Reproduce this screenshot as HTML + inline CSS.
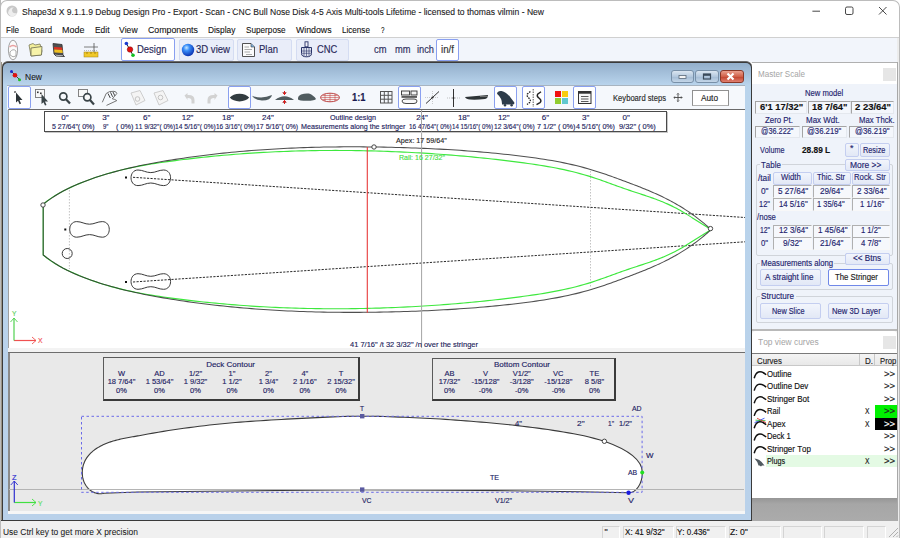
<!DOCTYPE html>
<html><head><meta charset="utf-8"><style>
html,body{margin:0;padding:0;}
body{width:900px;height:538px;position:relative;overflow:hidden;background:#f0f0f0;font-family:"Liberation Sans",sans-serif;}
div,span,svg{position:absolute;box-sizing:border-box;}
.t{white-space:pre;font-kerning:none;-webkit-text-stroke:0.15px currentColor;}
</style></head><body>
<div style="left:0px;top:0px;width:900px;height:38px;background:#ffffff;"></div>
<div style="left:0px;top:37px;width:900px;height:1px;background:#d0d0d0;"></div>
<div style="left:0px;top:38px;width:900px;height:24px;background:#f2f5fb;"></div>
<div style="left:897px;top:62px;width:3px;height:476px;background:#e9ecf1;"></div>
<div style="left:897px;top:38px;width:3px;height:500px;background:#ececec;"></div>
<div style="left:897px;top:62px;width:1px;height:459px;background:#a8a8a8;"></div>
<div style="left:0px;top:0px;width:1px;height:538px;background:#b8b8b8;"></div>
<div style="left:0px;top:62px;width:2px;height:459px;background:#9a9486;"></div>
<div style="left:2px;top:61px;width:750px;height:460px;background:#3a3a3a;border-radius:6px 6px 0 0;border-top:1px solid #6a6a6a;"></div>
<div style="left:3px;top:63px;width:748px;height:457px;background:linear-gradient(#93afcb,#b9d4ec 22px,#b9d1ea);border-radius:5px 5px 0 0;"></div>
<div style="left:7px;top:85px;width:738px;height:25px;background:#f5f8fc;border-top:1px solid #a8b4c0;"></div>
<div style="left:8px;top:109px;width:737px;height:240px;background:#ffffff;border-left:1px solid #a0a0a0;border-top:1px solid #6a6a6a;"></div>
<div style="left:8px;top:348px;width:737px;height:5px;background:#f3f3f3;border-bottom:1px solid #6e6e6e;"></div>
<div style="left:8px;top:353px;width:737px;height:159px;background:#e9e9e9;border-left:2px solid #8a8a8a;"></div>
<div style="left:8px;top:511px;width:737px;height:3px;background:#f6f6f6;"></div>
<div style="left:752px;top:62px;width:145px;height:267px;background:#eff3fa;"></div>
<div style="left:752px;top:62px;width:145px;height:22px;background:#ffffff;"></div>
<div style="left:752px;top:329px;width:145px;height:2px;background:#b9b9b9;"></div>
<div style="left:752px;top:331px;width:145px;height:167px;background:#ffffff;border-radius:4px 4px 0 0;"></div>
<div style="left:752px;top:498px;width:145px;height:23px;background:linear-gradient(#969696,#a6a6a6 6px,#ababab);"></div>
<div style="left:0px;top:520px;width:752px;height:1px;background:#3a3a3a;"></div>
<div style="left:0px;top:521px;width:900px;height:17px;background:#f0f0f0;"></div>
<span class="t" style="left:22.00px;top:5px;font-size:9.4px;line-height:13px;color:#1a1a1a;font-weight:normal;transform:scaleX(0.9133);transform-origin:0 0;-webkit-text-stroke:0.1px #1a1a1a;">Shape3d X 9.1.1.9 Debug Design Pro - Export - Scan - CNC Bull Nose Disk 4-5 Axis Multi-tools Lifetime - licensed to thomas vilmin - New</span>
<span class="t" style="left:5.80px;top:23px;font-size:9.4px;line-height:13px;color:#111;font-weight:normal;transform:scaleX(0.8709);transform-origin:0 0;-webkit-text-stroke:0.1px #111;">File</span>
<span class="t" style="left:29.50px;top:23px;font-size:9.4px;line-height:13px;color:#111;font-weight:normal;transform:scaleX(0.8774);transform-origin:0 0;-webkit-text-stroke:0.1px #111;">Board</span>
<span class="t" style="left:62.00px;top:23px;font-size:9.4px;line-height:13px;color:#111;font-weight:normal;transform:scaleX(0.9565);transform-origin:0 0;-webkit-text-stroke:0.1px #111;">Mode</span>
<span class="t" style="left:94.50px;top:23px;font-size:9.4px;line-height:13px;color:#111;font-weight:normal;transform:scaleX(0.8955);transform-origin:0 0;-webkit-text-stroke:0.1px #111;">Edit</span>
<span class="t" style="left:119.00px;top:23px;font-size:9.4px;line-height:13px;color:#111;font-weight:normal;transform:scaleX(0.9143);transform-origin:0 0;-webkit-text-stroke:0.1px #111;">View</span>
<span class="t" style="left:148.00px;top:23px;font-size:9.4px;line-height:13px;color:#111;font-weight:normal;transform:scaleX(0.9381);transform-origin:0 0;-webkit-text-stroke:0.1px #111;">Components</span>
<span class="t" style="left:208.30px;top:23px;font-size:9.4px;line-height:13px;color:#111;font-weight:normal;transform:scaleX(0.8887);transform-origin:0 0;-webkit-text-stroke:0.1px #111;">Display</span>
<span class="t" style="left:246.00px;top:23px;font-size:9.4px;line-height:13px;color:#111;font-weight:normal;transform:scaleX(0.8731);transform-origin:0 0;-webkit-text-stroke:0.1px #111;">Superpose</span>
<span class="t" style="left:296.00px;top:23px;font-size:9.4px;line-height:13px;color:#111;font-weight:normal;transform:scaleX(0.9360);transform-origin:0 0;-webkit-text-stroke:0.1px #111;">Windows</span>
<span class="t" style="left:342.00px;top:23px;font-size:9.4px;line-height:13px;color:#111;font-weight:normal;transform:scaleX(0.8640);transform-origin:0 0;-webkit-text-stroke:0.1px #111;">License</span>
<span class="t" style="left:380.50px;top:23px;font-size:9.4px;line-height:13px;color:#111;font-weight:normal;transform:scaleX(0.6709);transform-origin:0 0;-webkit-text-stroke:0.1px #111;">?</span>
<svg style="left:5px;top:39px" width="16" height="22" viewBox="0 0 16 22"><ellipse cx="8" cy="11" rx="4.6" ry="9.8" fill="#fafafa" stroke="#9a9a9a" stroke-width="0.9"/><path d="M4.5 8 Q8 5 11.5 8" fill="none" stroke="#e8a0a0" stroke-width="1.6"/><path d="M5 13 Q8 9 11 12 L11 17 Q8 19 5 16 Z" fill="#ffffff" stroke="#8a8a8a" stroke-width="0.7"/></svg>
<svg style="left:27px;top:42px" width="17" height="15" viewBox="0 0 17 15"><path d="M2 3 L6 1.5 L8 3 L13 2 L15 9 L14 13 L4 14 Z" fill="#f2ee9a" stroke="#7a7a5a" stroke-width="0.8"/><path d="M4 6 L15 4.5 L14.5 13 L4 14 Z" fill="#f6f2a8" stroke="#6a6a50" stroke-width="0.8"/></svg>
<svg style="left:51px;top:42px" width="15" height="16" viewBox="0 0 15 16"><path d="M2 1.5 L11 2.5 L12 13 L3 12 Z" fill="#505050" stroke="#303030" stroke-width="0.8"/><path d="M3 5 L11 5.6 L11.4 8 L3.2 7.5 Z" fill="#e03020"/><path d="M3.2 7.5 L11.4 8 L11.7 11 L3.4 10.5 Z" fill="#f0c020"/><path d="M12 13 L13.5 14.5 L5 14 L3 12" fill="none" stroke="#404040" stroke-width="1"/></svg>
<svg style="left:83px;top:43px" width="16" height="15" viewBox="0 0 16 15"><line x1="1" y1="4" x2="15" y2="4" stroke="#606060" stroke-width="0.8"/><line x1="1" y1="7.5" x2="15" y2="7.5" stroke="#909090" stroke-width="0.6" stroke-dasharray="1,1"/><line x1="11" y1="0" x2="11" y2="9" stroke="#505050" stroke-width="0.8"/><rect x="1" y="9" width="14" height="5" fill="#f0c828" stroke="#a08010" stroke-width="0.5"/><line x1="4" y1="9" x2="4" y2="11" stroke="#806000" stroke-width="0.6"/><line x1="8" y1="9" x2="8" y2="11" stroke="#806000" stroke-width="0.6"/><line x1="12" y1="9" x2="12" y2="11" stroke="#806000" stroke-width="0.6"/></svg>
<div style="left:121px;top:38px;width:54px;height:23px;background:#ffffff;border:1px solid #8aa0f0;border-radius:2px;"></div>
<div style="left:179px;top:39px;width:55px;height:22px;background:#e9edf9;border:1px solid #d4dcf2;border-radius:2px;"></div>
<div style="left:237px;top:39px;width:55px;height:22px;background:#e9edf9;border:1px solid #d4dcf2;border-radius:2px;"></div>
<div style="left:296px;top:39px;width:53px;height:22px;background:#e9edf9;border:1px solid #d4dcf2;border-radius:2px;"></div>
<div style="left:436px;top:39px;width:23px;height:22px;background:#ffffff;border:1px solid #8aa0f0;border-radius:2px;"></div>
<svg style="left:124px;top:41px" width="14" height="18" viewBox="0 0 14 18"><line x1="2.4" y1="2.5" x2="9" y2="14.3" stroke="#333" stroke-width="1"/><circle cx="2.4" cy="2.5" r="1.8" fill="#1a3ad0"/><circle cx="6" cy="8.5" r="2.8" fill="#e01010" stroke="#600" stroke-width="0.4"/><circle cx="9" cy="14.3" r="1.8" fill="#10c020"/></svg>
<svg style="left:181px;top:43px" width="14" height="14" viewBox="0 0 14 14"><defs><radialGradient id="sph" cx="0.38" cy="0.32" r="0.7"><stop offset="0" stop-color="#c8e8ff"/><stop offset="0.35" stop-color="#3a8ef8"/><stop offset="1" stop-color="#0a30b0"/></radialGradient></defs><circle cx="7" cy="7" r="6.2" fill="url(#sph)"/></svg>
<svg style="left:241px;top:42px" width="15" height="16" viewBox="0 0 15 16"><path d="M1.5 1.5 L10 1.5 L13.5 5 L13.5 14.5 L1.5 14.5 Z" fill="#fbfbfb" stroke="#404040" stroke-width="0.9"/><path d="M10 1.5 L10 5 L13.5 5" fill="#7ab0e0" stroke="#404040" stroke-width="0.6"/><path d="M3.5 5 L8 5 M3.5 7.5 L11 7.5 M3.5 10 L9 10 M5 12.5 L11 12.5" stroke="#888" stroke-width="0.7"/></svg>
<svg style="left:299px;top:41px" width="15" height="17" viewBox="0 0 15 17"><rect x="6" y="0.8" width="3" height="5" fill="#f0f0f8" stroke="#2a3468" stroke-width="0.9"/><path d="M2.5 6.5 L12.5 6.5 L12.5 12.5 Q12.5 15.8 7.5 15.8 Q2.5 15.8 2.5 12.5 Z" fill="#dfe3f0" stroke="#2a3468" stroke-width="1"/><path d="M2.5 10 L12.5 10 M3 12.3 L12 12.3 M5 6.5 L5 15 M7.5 6.5 L7.5 15.5 M10 6.5 L10 15" stroke="#2a3468" stroke-width="0.6"/></svg>
<span class="t" style="left:137.00px;top:42px;font-size:10.5px;line-height:14px;color:#2a2a5a;font-weight:normal;transform:scaleX(0.9027);transform-origin:0 0;">Design</span>
<span class="t" style="left:196.00px;top:42px;font-size:10.5px;line-height:14px;color:#2a2a5a;font-weight:normal;transform:scaleX(0.9096);transform-origin:0 0;">3D view</span>
<span class="t" style="left:259.00px;top:42px;font-size:10.5px;line-height:14px;color:#2a2a5a;font-weight:normal;transform:scaleX(0.9036);transform-origin:0 0;">Plan</span>
<span class="t" style="left:316.70px;top:42px;font-size:10.5px;line-height:14px;color:#2a2a5a;font-weight:normal;transform:scaleX(0.8920);transform-origin:0 0;">CNC</span>
<span class="t" style="left:373.50px;top:43px;font-size:10px;line-height:13px;color:#2e2e60;font-weight:normal;transform:scaleX(0.9381);transform-origin:0 0;">cm</span>
<span class="t" style="left:394.50px;top:43px;font-size:10px;line-height:13px;color:#2e2e60;font-weight:normal;transform:scaleX(0.9309);transform-origin:0 0;">mm</span>
<span class="t" style="left:416.50px;top:43px;font-size:10px;line-height:13px;color:#2e2e60;font-weight:normal;transform:scaleX(0.9264);transform-origin:0 0;">inch</span>
<span class="t" style="left:441.00px;top:43px;font-size:10px;line-height:13px;color:#333;font-weight:normal;transform:scaleX(0.9738);transform-origin:0 0;">in/f</span>
<svg style="left:720px;top:0px" width="178" height="22" viewBox="0 0 178 22"><line x1="92.4" y1="11.2" x2="100" y2="11.2" stroke="#333" stroke-width="0.9"/><rect x="125.5" y="7" width="7.5" height="7.5" rx="1.5" fill="none" stroke="#333" stroke-width="0.9"/><path d="M159 7 L166.5 14.5 M166.5 7 L159 14.5" stroke="#333" stroke-width="0.9"/></svg>
<svg style="left:5px;top:4px" width="14" height="14" viewBox="0 0 14 14"><circle cx="7" cy="7" r="5.5" fill="#c8c8c8"/><path d="M3 9 Q4 3 9 3.5 Q6 5 7.5 8 Q9 10 12 9 Q10 12.5 6.5 12.5 Q4 12 3 9Z" fill="#eeeeee"/></svg>
<svg style="left:9px;top:69.2px" width="14" height="14" viewBox="0 0 14 14"><line x1="2.5" y1="2.5" x2="11" y2="11" stroke="#333" stroke-width="0.9"/><circle cx="2.5" cy="2.5" r="1.5" fill="#1a2ad0"/><circle cx="6" cy="6.2" r="2.3" fill="#e01010"/><circle cx="10.5" cy="10.8" r="1.5" fill="#20c020"/></svg>
<span class="t" style="left:24.50px;top:70px;font-size:9.6px;line-height:13px;color:#1a1a1a;font-weight:normal;transform:scaleX(0.8843);transform-origin:0 0;-webkit-text-stroke:0.1px #1a1a1a;">New</span>
<div style="left:671px;top:70px;width:23px;height:13px;background:linear-gradient(#dbe6f1,#b4c9de 50%,#a2bbd4 51%,#c4d6e8);border:1px solid #7890a8;border-radius:3px;"></div>
<div style="left:695px;top:70px;width:24px;height:13px;background:linear-gradient(#dbe6f1,#b4c9de 50%,#a2bbd4 51%,#c4d6e8);border:1px solid #7890a8;border-radius:3px;"></div>
<div style="left:720px;top:70px;width:24px;height:13px;background:linear-gradient(#eaa08e,#d0604a 50%,#c0402a 51%,#e08070);border:1px solid #8a3828;border-radius:3px;"></div>
<svg style="left:671px;top:70px" width="73" height="13" viewBox="0 0 73 13"><rect x="8" y="5.5" width="7" height="3" fill="#f4f4f4" stroke="#5a6a7a" stroke-width="0.8"/><rect x="32.5" y="4" width="7" height="5" fill="none" stroke="#3a4a5a" stroke-width="1.2"/><rect x="33" y="4" width="6" height="1.8" fill="#3a4a5a"/><path d="M56.5 3.5 L62.5 9.5 M62.5 3.5 L56.5 9.5" stroke="#ffffff" stroke-width="2.2"/></svg>
<div style="left:8px;top:86px;width:23px;height:23px;background:#ffffff;border:1px solid #8aa0f0;border-radius:2px;"></div>
<div style="left:228px;top:86px;width:23px;height:23px;background:#ffffff;border:1px solid #8aa0f0;border-radius:2px;"></div>
<div style="left:398px;top:86px;width:23px;height:23px;background:#ffffff;border:1px solid #8aa0f0;border-radius:2px;"></div>
<div style="left:494px;top:86px;width:23px;height:23px;background:#ffffff;border:1px solid #8aa0f0;border-radius:2px;"></div>
<div style="left:522px;top:86px;width:23px;height:23px;background:#ffffff;border:1px solid #8aa0f0;border-radius:2px;"></div>
<div style="left:573px;top:86px;width:23px;height:23px;background:#ffffff;border:1px solid #8aa0f0;border-radius:2px;"></div>
<svg style="left:0;top:0" width="900" height="538" viewBox="0 0 900 538"><path d="M14.5 91.5 L15.5 92.5" stroke="#222" stroke-width="1.6"/><path d="M16 92.5 L22.5 100 L19.5 100 L21 103.5 L19.6 104.2 L18 100.8 L16 102.6 Z" fill="#2d3437"/><rect x="35.5" y="89.5" width="9" height="8" fill="#f8f8f8" stroke="#777" stroke-width="0.9"/><rect x="37" y="91.5" width="1.6" height="1.6" fill="#333"/><rect x="40" y="92.5" width="1.6" height="1.6" fill="#333"/><path d="M41.5 94 L48 101.5 L45 101.5 L46.5 105 L45 105.6 L43.5 102.3 L41.5 104 Z" fill="#3a4448"/><circle cx="63.3" cy="96.5" r="3.6" fill="none" stroke="#3a4448" stroke-width="1.7"/><path d="M66 99.2 L70 103.5" stroke="#3a4448" stroke-width="2.2"/><rect x="78.5" y="89.5" width="9" height="7" fill="#f8f8f8" stroke="#777" stroke-width="0.9"/><circle cx="87.3" cy="97.3" r="3.6" fill="#f8f8f8" stroke="#3a4448" stroke-width="1.7"/><path d="M90 100 L94 104.5" stroke="#3a4448" stroke-width="2.2"/><path d="M102.3 102.3 L106.2 93.5 Q109 90.8 114 91.3 Q116.8 91.8 116.8 93.6 L112.3 98.8 Q115 99.2 116.8 100.6 L106.5 105.4" fill="none" stroke="#666" stroke-width="0.9"/><path d="M108 93.5 L110.3 98 M110.5 92.3 L112.6 96.8 M113 92 L114.8 95.8" stroke="#333" stroke-width="0.9"/><path d="M131 93 L140 90.5 L145 100.5 L136 105 Z" fill="#f4f4f4" stroke="#c8c8c8" stroke-width="0.9"/><circle cx="137.5" cy="99" r="2.3" fill="none" stroke="#c4c4c4" stroke-width="1"/><path d="M154 93 L163 90.5 L168 100.5 L159 105 Z" fill="#f4f4f4" stroke="#c8c8c8" stroke-width="0.9"/><circle cx="160.5" cy="97.5" r="2.3" fill="none" stroke="#c4c4c4" stroke-width="1"/><path d="M184.5 95.5 L187.5 93 L187.5 95 Q194.5 94.5 194.5 100 L194.5 103.5 L191.5 103.5 L191.5 100.5 Q191.5 97.8 187.5 98 L187.5 100 Z" fill="#d2d2d2"/><path d="M217.5 95.5 L214.5 93 L214.5 95 Q207.5 94.5 207.5 100 L207.5 103.5 L210.5 103.5 L210.5 100.5 Q210.5 97.8 214.5 98 L214.5 100 Z" fill="#d2d2d2"/><path d="M229.8 97.6 Q233 93.8 239.5 93.8 Q246 93.8 249.2 97.6 Q246 101.4 239.5 101.4 Q233 101.4 229.8 97.6 Z" fill="#333c40"/><path d="M252 95.8 Q262 99.5 272 95 Q271 100.5 262 100.5 Q255 100.3 252 95.8 Z" fill="#505c60"/><path d="M275 100 Q284.5 92.5 294 100 Z" fill="#505c60"/><path d="M284.5 91 L284.5 94.5 M282.8 92.5 L284.5 94.5 L286.2 92.5 M284.5 104 L284.5 100.5 M282.8 102.5 L284.5 100.5 L286.2 102.5" stroke="#e01818" stroke-width="1"/><path d="M298 99.5 Q297.5 96 301 94.5 Q305 93 309 93.5 Q314 95.5 316 99 Q315 100.8 307 100.8 Q299 100.8 298 99.5 Z" fill="#505c60"/><ellipse cx="330" cy="97.5" rx="9.5" ry="4.3" fill="#f2f2f2" stroke="#b02020" stroke-width="0.8"/><path d="M321 97.5 L339 97.5 M322.5 95.5 L337.5 95.5 M322.5 99.5 L337.5 99.5 M325 93.8 L325 101.2 M330 93.2 L330 101.8 M335 93.8 L335 101.2" stroke="#c03030" stroke-width="0.5"/><rect x="380.5" y="91.5" width="11.5" height="11.5" fill="none" stroke="#555" stroke-width="1"/><path d="M384.3 91.5 L384.3 103 M388.2 91.5 L388.2 103 M380.5 95.3 L392 95.3 M380.5 99.2 L392 99.2" stroke="#555" stroke-width="1"/><rect x="401.5" y="91" width="8" height="4" fill="#f4f4f4" stroke="#333" stroke-width="0.9"/><rect x="411" y="91" width="6" height="4" fill="#f4f4f4" stroke="#333" stroke-width="0.9"/><rect x="401.5" y="96.2" width="15.5" height="1.5" fill="#333"/><path d="M402 101 Q402 99 406 99 L414 99 Q417 99 417 101 Q417 103.5 414 103.5 L406 103.5 Q402 103.5 402 101 Z" fill="#f8f8f8" stroke="#333" stroke-width="0.9"/><path d="M426 103.5 L439 91.5" stroke="#333" stroke-width="1"/><path d="M425 97.5 L439 97.5 M432.5 91 L432.5 104" stroke="#aaa" stroke-width="0.6" stroke-dasharray="1,1"/><circle cx="432.5" cy="97.5" r="1" fill="#222"/><path d="M453.5 89 L453.5 107" stroke="#333" stroke-width="1"/><path d="M447 98 L460 98" stroke="#999" stroke-width="0.6" stroke-dasharray="1,1"/><circle cx="453.5" cy="98" r="1" fill="#222"/><path d="M465 97 Q476 96 488 95 Q488 98.5 485 99 Q476 100 470 99.5 Q466 99 465 97 Z" fill="#2d3437"/><path d="M480 96.5 L488 96.5" stroke="#999" stroke-width="0.6"/><path d="M497 93.8 Q497.5 90.6 501.5 91 Q506.5 92 510.5 97.5 L514.3 102.6 Q514.8 104.6 512.5 104.6 L502 104.6 Q502.3 98.5 497 93.8 Z" fill="#2e3c4a"/><circle cx="505" cy="105.2" r="1.2" fill="#2e3c4a"/><circle cx="511.6" cy="105.2" r="1.2" fill="#2e3c4a"/><path d="M541 91.8 L537.6 94.3 Q536.6 96.3 538.4 97.6 L540.4 99.4 Q541.6 101.5 540 102.6 L536.5 104.6" fill="none" stroke="#222" stroke-width="1.4"/><path d="M530.4 91.6 L527.4 94 Q526.6 96 528.4 97.6 L530 99.4 Q530.9 101.5 529.5 102.6 L527 104.6" fill="none" stroke="#222" stroke-width="1.3" stroke-dasharray="1.6,1"/><path d="M533.2 89 L533.2 107" stroke="#444" stroke-width="0.9" stroke-dasharray="1.5,1"/><rect x="555" y="91" width="6" height="6" fill="#f01010"/><rect x="562" y="91" width="6" height="6" fill="#f8cc10"/><rect x="555" y="98" width="6" height="6" fill="#90cc30"/><rect x="562" y="98" width="6" height="6" fill="#60c8d0"/><rect x="578.5" y="91.5" width="12.5" height="12" fill="#f8f8f8" stroke="#333" stroke-width="1"/><rect x="578.5" y="91.5" width="12.5" height="2.2" fill="#333"/><path d="M581 96.5 L588.5 96.5 M581 99 L588.5 99 M581 101.5 L588.5 101.5" stroke="#333" stroke-width="0.8"/><path d="M678 93.5 L678 101.5 M674 97.5 L682 97.5" stroke="#444" stroke-width="0.9"/><path d="M676.8 94.5 L678 93.3 L679.2 94.5 M676.8 100.5 L678 101.7 L679.2 100.5 M675 96.3 L673.8 97.5 L675 98.7 M681 96.3 L682.2 97.5 L681 98.7" fill="none" stroke="#444" stroke-width="0.7"/></svg>
<span class="t" style="left:351.50px;top:90px;font-size:10.5px;line-height:14px;color:#1a1a50;font-weight:bold;transform:scaleX(0.8898);transform-origin:0 0;">1:1</span>
<span class="t" style="left:613.00px;top:91px;font-size:9.5px;line-height:13px;color:#2a2a2a;font-weight:normal;transform:scaleX(0.8027);transform-origin:0 0;">Keyboard steps</span>
<div style="left:692px;top:90px;width:37px;height:16px;background:#ffffff;border:1px solid #909090;border-bottom-color:#b0b0b0;"></div>
<span class="t" style="left:701.00px;top:91px;font-size:9.5px;line-height:13px;color:#222;font-weight:normal;transform:scaleX(0.8697);transform-origin:0 0;">Auto</span>
<svg style="left:0;top:0" width="900" height="538" viewBox="0 0 900 538"><path d="M69.4 190 L69.4 269 M590.5 171 L590.5 288" stroke="#b4b4b4" stroke-width="0.8" stroke-dasharray="1.5,1.5"/><path d="M133 177.3 L745 217.5 M133 282 L745 241.8" stroke="#2a2a2a" stroke-width="1" stroke-dasharray="2.2,1.3"/><path d="M43.20,204.30 L47.21,201.02 L51.21,198.10 L55.22,195.48 L59.22,193.13 L63.23,190.98 L67.23,188.99 L71.24,187.11 L75.25,185.32 L79.25,183.61 L83.26,181.98 L87.26,180.43 L91.27,178.95 L95.27,177.54 L99.28,176.21 L103.29,174.95 L107.29,173.75 L111.30,172.61 L115.30,171.54 L119.31,170.52 L123.32,169.55 L127.32,168.64 L131.33,167.77 L135.33,166.95 L139.34,166.17 L143.34,165.43 L147.35,164.72 L151.36,164.05 L155.36,163.41 L159.37,162.80 L163.37,162.21 L167.38,161.65 L171.38,161.10 L175.39,160.57 L179.40,160.05 L183.40,159.55 L187.41,159.06 L191.41,158.59 L195.42,158.13 L199.42,157.68 L203.43,157.25 L207.44,156.83 L211.44,156.43 L215.45,156.04 L219.45,155.66 L223.46,155.30 L227.46,154.95 L231.47,154.61 L235.48,154.29 L239.48,153.98 L243.49,153.69 L247.49,153.41 L251.50,153.14 L255.51,152.88 L259.51,152.64 L263.52,152.41 L267.52,152.20 L271.53,151.99 L275.53,151.80 L279.54,151.62 L283.55,151.46 L287.55,151.31 L291.56,151.17 L295.56,151.04 L299.57,150.93 L303.57,150.82 L307.58,150.73 L311.59,150.65 L315.59,150.59 L319.60,150.54 L323.60,150.49 L327.61,150.46 L331.61,150.45 L335.62,150.44 L339.63,150.45 L343.63,150.46 L347.64,150.49 L351.64,150.53 L355.65,150.59 L359.65,150.65 L363.66,150.72 L367.67,150.81 L371.67,150.91 L375.68,151.02 L379.68,151.14 L383.69,151.27 L387.69,151.41 L391.70,151.56 L395.71,151.73 L399.71,151.90 L403.72,152.08 L407.72,152.28 L411.73,152.49 L415.74,152.70 L419.74,152.93 L423.75,153.17 L427.75,153.42 L431.76,153.68 L435.76,153.96 L439.77,154.24 L443.78,154.54 L447.78,154.84 L451.79,155.16 L455.79,155.49 L459.80,155.83 L463.80,156.18 L467.81,156.55 L471.82,156.93 L475.82,157.31 L479.83,157.71 L483.83,158.12 L487.84,158.55 L491.84,158.98 L495.85,159.43 L499.86,159.89 L503.86,160.37 L507.87,160.85 L511.87,161.35 L515.88,161.86 L519.88,162.38 L523.89,162.91 L527.90,163.47 L531.90,164.04 L535.91,164.63 L539.91,165.25 L543.92,165.89 L547.93,166.57 L551.93,167.29 L555.94,168.04 L559.94,168.84 L563.95,169.68 L567.95,170.57 L571.96,171.51 L575.97,172.51 L579.97,173.57 L583.98,174.69 L587.98,175.87 L591.99,177.12 L595.99,178.44 L600.00,179.82 L601.60,180.38 L603.20,180.95 L604.80,181.52 L606.41,182.10 L608.01,182.67 L609.61,183.26 L611.21,183.84 L612.81,184.42 L614.41,185.01 L616.01,185.59 L617.62,186.17 L619.22,186.75 L620.82,187.32 L622.42,187.89 L624.02,188.46 L625.62,189.01 L627.22,189.57 L628.83,190.11 L630.43,190.65 L632.03,191.18 L633.63,191.71 L635.23,192.23 L636.83,192.76 L638.43,193.28 L640.04,193.81 L641.64,194.33 L643.24,194.86 L644.84,195.40 L646.44,195.93 L648.04,196.48 L649.64,197.03 L651.25,197.59 L652.85,198.16 L654.45,198.74 L656.05,199.33 L657.65,199.93 L659.25,200.55 L660.86,201.19 L662.46,201.84 L664.06,202.50 L665.66,203.19 L667.26,203.90 L668.86,204.62 L670.46,205.37 L672.07,206.14 L673.67,206.94 L675.27,207.75 L676.87,208.59 L678.47,209.46 L680.07,210.35 L681.67,211.26 L683.28,212.20 L684.88,213.16 L686.48,214.13 L688.08,215.12 L689.68,216.12 L691.28,217.13 L692.88,218.15 L694.49,219.17 L696.09,220.19 L697.69,221.22 L699.29,222.24 L700.89,223.26 L702.49,224.26 L704.09,225.26 L705.70,226.25 L707.30,227.22 L708.90,228.17 L710.50,229.11 L710.50,230.09 L708.90,231.03 L707.30,231.98 L705.70,232.95 L704.09,233.94 L702.49,234.94 L700.89,235.94 L699.29,236.96 L697.69,237.98 L696.09,239.01 L694.49,240.03 L692.88,241.05 L691.28,242.07 L689.68,243.08 L688.08,244.08 L686.48,245.07 L684.88,246.04 L683.28,247.00 L681.67,247.94 L680.07,248.85 L678.47,249.74 L676.87,250.61 L675.27,251.45 L673.67,252.26 L672.07,253.06 L670.46,253.83 L668.86,254.58 L667.26,255.30 L665.66,256.01 L664.06,256.70 L662.46,257.36 L660.86,258.01 L659.25,258.65 L657.65,259.27 L656.05,259.87 L654.45,260.46 L652.85,261.04 L651.25,261.61 L649.64,262.17 L648.04,262.72 L646.44,263.27 L644.84,263.80 L643.24,264.34 L641.64,264.87 L640.04,265.39 L638.43,265.92 L636.83,266.44 L635.23,266.97 L633.63,267.49 L632.03,268.02 L630.43,268.55 L628.83,269.09 L627.22,269.63 L625.62,270.19 L624.02,270.74 L622.42,271.31 L620.82,271.88 L619.22,272.45 L617.62,273.03 L616.01,273.61 L614.41,274.19 L612.81,274.78 L611.21,275.36 L609.61,275.94 L608.01,276.53 L606.41,277.10 L604.80,277.68 L603.20,278.25 L601.60,278.82 L600.00,279.38 L595.99,280.76 L591.99,282.08 L587.98,283.33 L583.98,284.51 L579.97,285.63 L575.97,286.69 L571.96,287.69 L567.95,288.63 L563.95,289.52 L559.94,290.36 L555.94,291.16 L551.93,291.91 L547.93,292.63 L543.92,293.31 L539.91,293.95 L535.91,294.57 L531.90,295.16 L527.90,295.73 L523.89,296.29 L519.88,296.82 L515.88,297.34 L511.87,297.85 L507.87,298.35 L503.86,298.83 L499.86,299.31 L495.85,299.77 L491.84,300.22 L487.84,300.65 L483.83,301.08 L479.83,301.49 L475.82,301.89 L471.82,302.27 L467.81,302.65 L463.80,303.02 L459.80,303.37 L455.79,303.71 L451.79,304.04 L447.78,304.36 L443.78,304.66 L439.77,304.96 L435.76,305.24 L431.76,305.52 L427.75,305.78 L423.75,306.03 L419.74,306.27 L415.74,306.50 L411.73,306.71 L407.72,306.92 L403.72,307.12 L399.71,307.30 L395.71,307.47 L391.70,307.64 L387.69,307.79 L383.69,307.93 L379.68,308.06 L375.68,308.18 L371.67,308.29 L367.67,308.39 L363.66,308.48 L359.65,308.55 L355.65,308.61 L351.64,308.67 L347.64,308.71 L343.63,308.74 L339.63,308.75 L335.62,308.76 L331.61,308.75 L327.61,308.74 L323.60,308.71 L319.60,308.66 L315.59,308.61 L311.59,308.55 L307.58,308.47 L303.57,308.38 L299.57,308.27 L295.56,308.16 L291.56,308.03 L287.55,307.89 L283.55,307.74 L279.54,307.58 L275.53,307.40 L271.53,307.21 L267.52,307.00 L263.52,306.79 L259.51,306.56 L255.51,306.32 L251.50,306.06 L247.49,305.79 L243.49,305.51 L239.48,305.22 L235.48,304.91 L231.47,304.59 L227.46,304.25 L223.46,303.90 L219.45,303.54 L215.45,303.16 L211.44,302.77 L207.44,302.37 L203.43,301.95 L199.42,301.52 L195.42,301.07 L191.41,300.61 L187.41,300.14 L183.40,299.65 L179.40,299.15 L175.39,298.63 L171.38,298.10 L167.38,297.55 L163.37,296.99 L159.37,296.40 L155.36,295.79 L151.36,295.15 L147.35,294.48 L143.34,293.77 L139.34,293.03 L135.33,292.25 L131.33,291.43 L127.32,290.56 L123.32,289.65 L119.31,288.68 L115.30,287.66 L111.30,286.59 L107.29,285.45 L103.29,284.25 L99.28,282.99 L95.27,281.66 L91.27,280.25 L87.26,278.77 L83.26,277.22 L79.25,275.59 L75.25,273.88 L71.24,272.09 L67.23,270.21 L63.23,268.22 L59.22,266.07 L55.22,263.72 L51.21,261.10 L47.21,258.18 L43.20,254.90 Z" fill="none" stroke="#3ee83e" stroke-width="1.15"/><path d="M43.20,204.22 L47.21,201.17 L51.21,198.33 L55.22,195.71 L59.22,193.27 L63.23,191.01 L67.23,188.92 L71.24,186.97 L75.25,185.16 L79.25,183.47 L83.26,181.89 L87.26,180.39 L91.27,178.98 L95.27,177.62 L99.28,176.32 L103.29,175.07 L107.29,173.87 L111.30,172.72 L115.30,171.62 L119.31,170.56 L123.32,169.54 L127.32,168.56 L131.33,167.63 L135.33,166.73 L139.34,165.86 L143.34,165.03 L147.35,164.23 L151.36,163.46 L155.36,162.72 L159.37,162.00 L163.37,161.31 L167.38,160.64 L171.38,159.99 L175.39,159.36 L179.40,158.75 L183.40,158.16 L187.41,157.58 L191.41,157.02 L195.42,156.47 L199.42,155.95 L203.43,155.44 L207.44,154.94 L211.44,154.47 L215.45,154.01 L219.45,153.56 L223.46,153.13 L227.46,152.72 L231.47,152.32 L235.48,151.94 L239.48,151.57 L243.49,151.22 L247.49,150.88 L251.50,150.56 L255.51,150.25 L259.51,149.96 L263.52,149.68 L267.52,149.41 L271.53,149.16 L275.53,148.92 L279.54,148.70 L283.55,148.49 L287.55,148.29 L291.56,148.11 L295.56,147.94 L299.57,147.78 L303.57,147.63 L307.58,147.50 L311.59,147.38 L315.59,147.27 L319.60,147.18 L323.60,147.09 L327.61,147.02 L331.61,146.96 L335.62,146.91 L339.63,146.87 L343.63,146.84 L347.64,146.82 L351.64,146.82 L355.65,146.82 L359.65,146.84 L363.66,146.86 L367.67,146.90 L371.67,146.94 L375.68,147.00 L379.68,147.06 L383.69,147.14 L387.69,147.22 L391.70,147.31 L395.71,147.41 L399.71,147.52 L403.72,147.64 L407.72,147.77 L411.73,147.91 L415.74,148.05 L419.74,148.21 L423.75,148.37 L427.75,148.55 L431.76,148.74 L435.76,148.93 L439.77,149.14 L443.78,149.36 L447.78,149.59 L451.79,149.83 L455.79,150.09 L459.80,150.35 L463.80,150.63 L467.81,150.92 L471.82,151.23 L475.82,151.54 L479.83,151.87 L483.83,152.22 L487.84,152.57 L491.84,152.95 L495.85,153.33 L499.86,153.73 L503.86,154.15 L507.87,154.58 L511.87,155.03 L515.88,155.49 L519.88,155.97 L523.89,156.46 L527.90,156.97 L531.90,157.51 L535.91,158.07 L539.91,158.65 L543.92,159.27 L547.93,159.92 L551.93,160.60 L555.94,161.32 L559.94,162.08 L563.95,162.88 L567.95,163.72 L571.96,164.62 L575.97,165.57 L579.97,166.57 L583.98,167.62 L587.98,168.74 L591.99,169.91 L595.99,171.15 L600.00,172.44 L601.60,172.97 L603.20,173.51 L604.80,174.05 L606.41,174.61 L608.01,175.17 L609.61,175.73 L611.21,176.30 L612.81,176.87 L614.41,177.45 L616.01,178.04 L617.62,178.62 L619.22,179.21 L620.82,179.81 L622.42,180.40 L624.02,181.00 L625.62,181.60 L627.22,182.20 L628.83,182.81 L630.43,183.41 L632.03,184.02 L633.63,184.63 L635.23,185.24 L636.83,185.86 L638.43,186.49 L640.04,187.11 L641.64,187.75 L643.24,188.39 L644.84,189.04 L646.44,189.70 L648.04,190.36 L649.64,191.03 L651.25,191.72 L652.85,192.41 L654.45,193.11 L656.05,193.83 L657.65,194.56 L659.25,195.30 L660.86,196.05 L662.46,196.82 L664.06,197.60 L665.66,198.39 L667.26,199.20 L668.86,200.03 L670.46,200.88 L672.07,201.74 L673.67,202.62 L675.27,203.51 L676.87,204.43 L678.47,205.37 L680.07,206.32 L681.67,207.30 L683.28,208.30 L684.88,209.32 L686.48,210.36 L688.08,211.42 L689.68,212.51 L691.28,213.63 L692.88,214.76 L694.49,215.93 L696.09,217.12 L697.69,218.33 L699.29,219.57 L700.89,220.84 L702.49,222.14 L704.09,223.47 L705.70,224.82 L707.30,226.21 L708.90,227.62 L710.50,229.06 L710.50,230.14 L708.90,231.58 L707.30,232.99 L705.70,234.38 L704.09,235.73 L702.49,237.06 L700.89,238.36 L699.29,239.63 L697.69,240.87 L696.09,242.08 L694.49,243.27 L692.88,244.44 L691.28,245.57 L689.68,246.69 L688.08,247.78 L686.48,248.84 L684.88,249.88 L683.28,250.90 L681.67,251.90 L680.07,252.88 L678.47,253.83 L676.87,254.77 L675.27,255.69 L673.67,256.58 L672.07,257.46 L670.46,258.32 L668.86,259.17 L667.26,260.00 L665.66,260.81 L664.06,261.60 L662.46,262.38 L660.86,263.15 L659.25,263.90 L657.65,264.64 L656.05,265.37 L654.45,266.09 L652.85,266.79 L651.25,267.48 L649.64,268.17 L648.04,268.84 L646.44,269.50 L644.84,270.16 L643.24,270.81 L641.64,271.45 L640.04,272.09 L638.43,272.71 L636.83,273.34 L635.23,273.96 L633.63,274.57 L632.03,275.18 L630.43,275.79 L628.83,276.39 L627.22,277.00 L625.62,277.60 L624.02,278.20 L622.42,278.80 L620.82,279.39 L619.22,279.99 L617.62,280.58 L616.01,281.16 L614.41,281.75 L612.81,282.33 L611.21,282.90 L609.61,283.47 L608.01,284.03 L606.41,284.59 L604.80,285.15 L603.20,285.69 L601.60,286.23 L600.00,286.76 L595.99,288.05 L591.99,289.29 L587.98,290.46 L583.98,291.58 L579.97,292.63 L575.97,293.63 L571.96,294.58 L567.95,295.48 L563.95,296.32 L559.94,297.12 L555.94,297.88 L551.93,298.60 L547.93,299.28 L543.92,299.93 L539.91,300.55 L535.91,301.13 L531.90,301.69 L527.90,302.23 L523.89,302.74 L519.88,303.23 L515.88,303.71 L511.87,304.17 L507.87,304.62 L503.86,305.05 L499.86,305.47 L495.85,305.87 L491.84,306.25 L487.84,306.63 L483.83,306.98 L479.83,307.33 L475.82,307.66 L471.82,307.97 L467.81,308.28 L463.80,308.57 L459.80,308.85 L455.79,309.11 L451.79,309.37 L447.78,309.61 L443.78,309.84 L439.77,310.06 L435.76,310.27 L431.76,310.46 L427.75,310.65 L423.75,310.83 L419.74,310.99 L415.74,311.15 L411.73,311.29 L407.72,311.43 L403.72,311.56 L399.71,311.68 L395.71,311.79 L391.70,311.89 L387.69,311.98 L383.69,312.06 L379.68,312.14 L375.68,312.20 L371.67,312.26 L367.67,312.30 L363.66,312.34 L359.65,312.36 L355.65,312.38 L351.64,312.38 L347.64,312.38 L343.63,312.36 L339.63,312.33 L335.62,312.29 L331.61,312.24 L327.61,312.18 L323.60,312.11 L319.60,312.02 L315.59,311.93 L311.59,311.82 L307.58,311.70 L303.57,311.57 L299.57,311.42 L295.56,311.26 L291.56,311.09 L287.55,310.91 L283.55,310.71 L279.54,310.50 L275.53,310.28 L271.53,310.04 L267.52,309.79 L263.52,309.52 L259.51,309.24 L255.51,308.95 L251.50,308.64 L247.49,308.32 L243.49,307.98 L239.48,307.63 L235.48,307.26 L231.47,306.88 L227.46,306.48 L223.46,306.07 L219.45,305.64 L215.45,305.19 L211.44,304.73 L207.44,304.26 L203.43,303.76 L199.42,303.25 L195.42,302.73 L191.41,302.18 L187.41,301.62 L183.40,301.04 L179.40,300.45 L175.39,299.84 L171.38,299.21 L167.38,298.56 L163.37,297.89 L159.37,297.20 L155.36,296.48 L151.36,295.74 L147.35,294.97 L143.34,294.17 L139.34,293.34 L135.33,292.47 L131.33,291.57 L127.32,290.64 L123.32,289.66 L119.31,288.64 L115.30,287.58 L111.30,286.48 L107.29,285.33 L103.29,284.13 L99.28,282.88 L95.27,281.58 L91.27,280.22 L87.26,278.81 L83.26,277.31 L79.25,275.73 L75.25,274.04 L71.24,272.23 L67.23,270.28 L63.23,268.19 L59.22,265.93 L55.22,263.49 L51.21,260.87 L47.21,258.03 L43.20,254.98 Z" fill="none" stroke="#303030" stroke-width="1.05" stroke-opacity="0.85"/><path d="M138.0,170.0 C143.0,170.0 145.8,172.60000000000002 150.8,172.60000000000002 C155.8,172.60000000000002 158.60000000000002,170.0 163.60000000000002,170.0 C172.90000000000003,170.0 172.90000000000003,185.60000000000002 163.60000000000002,185.60000000000002 C158.60000000000002,185.60000000000002 155.8,183.0 150.8,183.0 C145.8,183.0 143.0,185.60000000000002 138.0,185.60000000000002 C128.7,185.60000000000002 128.7,170.0 138.0,170.0 Z" fill="none" stroke="#3a3a3a" stroke-width="1"/><path d="M76.7,221.6 C81.7,221.6 84.5,224.20000000000002 89.5,224.20000000000002 C94.5,224.20000000000002 97.3,221.6 102.3,221.6 C111.6,221.6 111.6,237.20000000000002 102.3,237.20000000000002 C97.3,237.20000000000002 94.5,234.6 89.5,234.6 C84.5,234.6 81.7,237.20000000000002 76.7,237.20000000000002 C67.4,237.20000000000002 67.4,221.6 76.7,221.6 Z" fill="none" stroke="#3a3a3a" stroke-width="1"/><path d="M138.0,273.7 C143.0,273.7 145.8,276.3 150.8,276.3 C155.8,276.3 158.60000000000002,273.7 163.60000000000002,273.7 C172.90000000000003,273.7 172.90000000000003,289.3 163.60000000000002,289.3 C158.60000000000002,289.3 155.8,286.7 150.8,286.7 C145.8,286.7 143.0,289.3 138.0,289.3 C128.7,289.3 128.7,273.7 138.0,273.7 Z" fill="none" stroke="#3a3a3a" stroke-width="1"/><circle cx="67.2" cy="253.5" r="5" fill="none" stroke="#3a3a3a" stroke-width="1"/><rect x="125" y="176.5" width="2" height="2" fill="#111"/><rect x="64.3" y="228.5" width="2" height="2" fill="#111"/><rect x="125" y="281" width="2" height="2" fill="#111"/><path d="M367.3 147 L367.3 312.7" stroke="#e83a3a" stroke-width="1.1"/><path d="M421.6 110 L421.6 348" stroke="#a4a4a4" stroke-width="1"/><circle cx="374" cy="147" r="2.2" fill="#fff" stroke="#333" stroke-width="0.9"/><circle cx="43" cy="205" r="2.2" fill="#fff" stroke="#333" stroke-width="0.9"/><circle cx="710.5" cy="228.6" r="2.2" fill="#fff" stroke="#333" stroke-width="0.9"/><path d="M14 340.5 L36 340.5" stroke="#f05050" stroke-width="1.2"/><path d="M32 337 L36 340.5 L32 344" fill="none" stroke="#f05050" stroke-width="0.9"/><path d="M14 340.5 L14 318" stroke="#50d050" stroke-width="1.2"/><path d="M10.5 322 L14 318 L17.5 322" fill="none" stroke="#50d050" stroke-width="0.9"/></svg>
<span class="t" style="left:12.00px;top:309px;font-size:6.5px;line-height:9px;color:#60d060;font-weight:normal;transform:scaleX(1.0372);transform-origin:0 0;">Y</span>
<span class="t" style="left:38.00px;top:336px;font-size:6.5px;line-height:9px;color:#f05050;font-weight:normal;transform:scaleX(1.0372);transform-origin:0 0;">X</span>
<span class="t" style="left:396.30px;top:135px;font-size:8px;line-height:11px;color:#262626;font-weight:normal;transform:scaleX(0.8983);transform-origin:0 0;">Apex: 17 59/64&quot;</span>
<span class="t" style="left:399.00px;top:152px;font-size:8px;line-height:11px;color:#3ee03e;font-weight:normal;transform:scaleX(0.8793);transform-origin:0 0;">Rail: 16 27/32&quot;</span>
<span class="t" style="left:350.00px;top:339px;font-size:8px;line-height:11px;color:#23235a;font-weight:normal;transform:scaleX(0.9351);transform-origin:0 0;">41 7/16&quot; /t 32 3/32&quot; /n over the stringer</span>
<div style="left:44px;top:111px;width:623px;height:21px;background:#ffffff;border:1px solid #4a4a4a;box-shadow:1px 1px 0 #c8c8c8;"></div>
<span class="t" style="left:61.26px;top:112px;font-size:8px;line-height:11px;color:#1c1c5c;font-weight:normal;">0&quot;</span>
<span class="t" style="left:102.16px;top:112px;font-size:8px;line-height:11px;color:#1c1c5c;font-weight:normal;">3&quot;</span>
<span class="t" style="left:143.06px;top:112px;font-size:8px;line-height:11px;color:#1c1c5c;font-weight:normal;">6&quot;</span>
<span class="t" style="left:181.73px;top:112px;font-size:8px;line-height:11px;color:#1c1c5c;font-weight:normal;">12&quot;</span>
<span class="t" style="left:222.03px;top:112px;font-size:8px;line-height:11px;color:#1c1c5c;font-weight:normal;">18&quot;</span>
<span class="t" style="left:262.03px;top:112px;font-size:8px;line-height:11px;color:#1c1c5c;font-weight:normal;">24&quot;</span>
<span class="t" style="left:416.13px;top:112px;font-size:8px;line-height:11px;color:#1c1c5c;font-weight:normal;">24&quot;</span>
<span class="t" style="left:457.93px;top:112px;font-size:8px;line-height:11px;color:#1c1c5c;font-weight:normal;">18&quot;</span>
<span class="t" style="left:497.93px;top:112px;font-size:8px;line-height:11px;color:#1c1c5c;font-weight:normal;">12&quot;</span>
<span class="t" style="left:541.76px;top:112px;font-size:8px;line-height:11px;color:#1c1c5c;font-weight:normal;">6&quot;</span>
<span class="t" style="left:582.06px;top:112px;font-size:8px;line-height:11px;color:#1c1c5c;font-weight:normal;">3&quot;</span>
<span class="t" style="left:622.46px;top:112px;font-size:8px;line-height:11px;color:#1c1c5c;font-weight:normal;">0&quot;</span>
<span class="t" style="left:329.80px;top:112px;font-size:8px;line-height:11px;color:#1c1c5c;font-weight:normal;transform:scaleX(0.8995);transform-origin:0 0;">Outline design</span>
<span class="t" style="left:51.60px;top:121px;font-size:8px;line-height:11px;color:#1c1c5c;font-weight:normal;transform:scaleX(0.8758);transform-origin:0 0;">5 27/64&quot;( 0%)</span>
<span class="t" style="left:103.00px;top:121px;font-size:8px;line-height:11px;color:#1c1c5c;font-weight:normal;transform:scaleX(0.7418);transform-origin:0 0;">9&quot;</span>
<span class="t" style="left:116.40px;top:121px;font-size:8px;line-height:11px;color:#1c1c5c;font-weight:normal;transform:scaleX(0.9153);transform-origin:0 0;">( 0%)</span>
<span class="t" style="left:134.50px;top:121px;font-size:8px;line-height:11px;color:#1c1c5c;font-weight:normal;transform:scaleX(0.8261);transform-origin:0 0;">11 9/32&quot;( 0%)</span>
<span class="t" style="left:174.80px;top:121px;font-size:8px;line-height:11px;color:#1c1c5c;font-weight:normal;transform:scaleX(0.8347);transform-origin:0 0;">14 5/16&quot;( 0%)</span>
<span class="t" style="left:216.00px;top:121px;font-size:8px;line-height:11px;color:#1c1c5c;font-weight:normal;transform:scaleX(0.8100);transform-origin:0 0;">16 3/16&quot;( 0%)</span>
<span class="t" style="left:256.00px;top:121px;font-size:8px;line-height:11px;color:#1c1c5c;font-weight:normal;transform:scaleX(0.8655);transform-origin:0 0;">17 5/16&quot;( 0%)</span>
<span class="t" style="left:301.10px;top:121px;font-size:8px;line-height:11px;color:#1c1c5c;font-weight:normal;transform:scaleX(0.8926);transform-origin:0 0;">Measurements along the stringer</span>
<span class="t" style="left:408.70px;top:121px;font-size:8px;line-height:11px;color:#1c1c5c;font-weight:normal;transform:scaleX(0.8023);transform-origin:0 0;">16 47/64&quot;( 0%)</span>
<span class="t" style="left:452.00px;top:121px;font-size:8px;line-height:11px;color:#1c1c5c;font-weight:normal;transform:scaleX(0.7740);transform-origin:0 0;">14 15/16&quot;( 0%)</span>
<span class="t" style="left:493.80px;top:121px;font-size:8px;line-height:11px;color:#1c1c5c;font-weight:normal;transform:scaleX(0.8347);transform-origin:0 0;">12 3/64&quot;( 0%)</span>
<span class="t" style="left:537.10px;top:121px;font-size:8px;line-height:11px;color:#1c1c5c;font-weight:normal;transform:scaleX(0.9171);transform-origin:0 0;">7 1/2&quot; ( 0%)</span>
<span class="t" style="left:576.20px;top:121px;font-size:8px;line-height:11px;color:#1c1c5c;font-weight:normal;transform:scaleX(0.8801);transform-origin:0 0;">4 5/16&quot;( 0%)</span>
<span class="t" style="left:618.80px;top:121px;font-size:8px;line-height:11px;color:#1c1c5c;font-weight:normal;transform:scaleX(0.9235);transform-origin:0 0;">9/32&quot; ( 0%)</span>
<div style="left:421px;top:110px;width:1px;height:22px;background:#a4a4a4;"></div>
<div style="left:103px;top:357px;width:257px;height:44px;border:1px solid #4a4a4a;border-width:1px 2px 2px 1px;border-color:#5a5a5a #3a3a3a #3a3a3a #5a5a5a;"></div>
<div style="left:432px;top:358px;width:184px;height:43px;border:1px solid #4a4a4a;border-width:1px 2px 2px 1px;border-color:#5a5a5a #3a3a3a #3a3a3a #5a5a5a;"></div>
<span class="t" style="left:206.14px;top:359px;font-size:8px;line-height:11px;color:#1e1e64;font-weight:normal;">Deck Contour</span>
<span class="t" style="left:117.96px;top:369px;font-size:7.5px;line-height:10px;color:#1e1e64;font-weight:normal;">W</span>
<span class="t" style="left:107.65px;top:377px;font-size:7.5px;line-height:10px;color:#1e1e64;font-weight:normal;">18 7/64&quot;</span>
<span class="t" style="left:116.08px;top:386px;font-size:7.5px;line-height:10px;color:#1e1e64;font-weight:normal;">0%</span>
<span class="t" style="left:154.29px;top:369px;font-size:7.5px;line-height:10px;color:#1e1e64;font-weight:normal;">AD</span>
<span class="t" style="left:145.65px;top:377px;font-size:7.5px;line-height:10px;color:#1e1e64;font-weight:normal;">1 53/64&quot;</span>
<span class="t" style="left:154.08px;top:386px;font-size:7.5px;line-height:10px;color:#1e1e64;font-weight:normal;">0%</span>
<span class="t" style="left:188.96px;top:369px;font-size:7.5px;line-height:10px;color:#1e1e64;font-weight:normal;">1/2&quot;</span>
<span class="t" style="left:183.74px;top:377px;font-size:7.5px;line-height:10px;color:#1e1e64;font-weight:normal;">1 9/32&quot;</span>
<span class="t" style="left:190.08px;top:386px;font-size:7.5px;line-height:10px;color:#1e1e64;font-weight:normal;">0%</span>
<span class="t" style="left:228.59px;top:369px;font-size:7.5px;line-height:10px;color:#1e1e64;font-weight:normal;">1&quot;</span>
<span class="t" style="left:222.32px;top:377px;font-size:7.5px;line-height:10px;color:#1e1e64;font-weight:normal;">1 1/2&quot;</span>
<span class="t" style="left:226.58px;top:386px;font-size:7.5px;line-height:10px;color:#1e1e64;font-weight:normal;">0%</span>
<span class="t" style="left:265.09px;top:369px;font-size:7.5px;line-height:10px;color:#1e1e64;font-weight:normal;">2&quot;</span>
<span class="t" style="left:258.82px;top:377px;font-size:7.5px;line-height:10px;color:#1e1e64;font-weight:normal;">1 3/4&quot;</span>
<span class="t" style="left:263.08px;top:386px;font-size:7.5px;line-height:10px;color:#1e1e64;font-weight:normal;">0%</span>
<span class="t" style="left:301.39px;top:369px;font-size:7.5px;line-height:10px;color:#1e1e64;font-weight:normal;">4&quot;</span>
<span class="t" style="left:293.04px;top:377px;font-size:7.5px;line-height:10px;color:#1e1e64;font-weight:normal;">2 1/16&quot;</span>
<span class="t" style="left:299.38px;top:386px;font-size:7.5px;line-height:10px;color:#1e1e64;font-weight:normal;">0%</span>
<span class="t" style="left:338.71px;top:369px;font-size:7.5px;line-height:10px;color:#1e1e64;font-weight:normal;">T</span>
<span class="t" style="left:327.15px;top:377px;font-size:7.5px;line-height:10px;color:#1e1e64;font-weight:normal;">2 15/32&quot;</span>
<span class="t" style="left:335.58px;top:386px;font-size:7.5px;line-height:10px;color:#1e1e64;font-weight:normal;">0%</span>
<span class="t" style="left:493.99px;top:359px;font-size:8px;line-height:11px;color:#1e1e64;font-weight:normal;">Bottom Contour</span>
<span class="t" style="left:444.39px;top:369px;font-size:7.5px;line-height:10px;color:#1e1e64;font-weight:normal;">AB</span>
<span class="t" style="left:438.68px;top:377px;font-size:7.5px;line-height:10px;color:#1e1e64;font-weight:normal;">17/32&quot;</span>
<span class="t" style="left:443.98px;top:386px;font-size:7.5px;line-height:10px;color:#1e1e64;font-weight:normal;">0%</span>
<span class="t" style="left:483.00px;top:369px;font-size:7.5px;line-height:10px;color:#1e1e64;font-weight:normal;">V</span>
<span class="t" style="left:471.45px;top:377px;font-size:7.5px;line-height:10px;color:#1e1e64;font-weight:normal;">-15/128&quot;</span>
<span class="t" style="left:478.83px;top:386px;font-size:7.5px;line-height:10px;color:#1e1e64;font-weight:normal;">-0%</span>
<span class="t" style="left:512.65px;top:369px;font-size:7.5px;line-height:10px;color:#1e1e64;font-weight:normal;">V1/2&quot;</span>
<span class="t" style="left:509.74px;top:377px;font-size:7.5px;line-height:10px;color:#1e1e64;font-weight:normal;">-3/128&quot;</span>
<span class="t" style="left:515.03px;top:386px;font-size:7.5px;line-height:10px;color:#1e1e64;font-weight:normal;">-0%</span>
<span class="t" style="left:553.09px;top:369px;font-size:7.5px;line-height:10px;color:#1e1e64;font-weight:normal;">VC</span>
<span class="t" style="left:544.25px;top:377px;font-size:7.5px;line-height:10px;color:#1e1e64;font-weight:normal;">-15/128&quot;</span>
<span class="t" style="left:551.63px;top:386px;font-size:7.5px;line-height:10px;color:#1e1e64;font-weight:normal;">-0%</span>
<span class="t" style="left:589.61px;top:369px;font-size:7.5px;line-height:10px;color:#1e1e64;font-weight:normal;">TE</span>
<span class="t" style="left:584.73px;top:377px;font-size:7.5px;line-height:10px;color:#1e1e64;font-weight:normal;">8 5/8&quot;</span>
<span class="t" style="left:588.98px;top:386px;font-size:7.5px;line-height:10px;color:#1e1e64;font-weight:normal;">0%</span>
<svg style="left:0;top:0" width="900" height="538" viewBox="0 0 900 538"><path d="M104.30,493.29 L102.75,493.55 L101.25,493.68 L99.80,493.69 L98.39,493.58 L97.04,493.36 L95.73,493.04 L94.48,492.62 L93.28,492.10 L92.13,491.49 L91.04,490.80 L90.01,490.03 L89.03,489.19 L88.12,488.28 L87.27,487.31 L86.48,486.29 L85.75,485.21 L85.09,484.08 L84.50,482.92 L83.97,481.72 L83.52,480.49 L83.13,479.24 L82.82,477.96 L82.58,476.67 L82.41,475.37 L82.30,474.06 L82.26,472.75 L82.29,471.43 L82.39,470.12 L82.55,468.81 L82.77,467.51 L83.05,466.22 L83.40,464.95 L83.81,463.70 L84.27,462.48 L84.80,461.28 L85.38,460.12 L86.02,458.98 L86.71,457.89 L87.45,456.83 L88.25,455.80 L89.09,454.81 L89.97,453.86 L90.90,452.93 L91.86,452.04 L92.86,451.19 L93.90,450.36 L94.96,449.57 L96.06,448.80 L97.18,448.07 L98.32,447.37 L99.48,446.70 L100.66,446.06 L101.86,445.44 L103.07,444.86 L104.29,444.30 L105.52,443.77 L106.76,443.26 L108.01,442.78 L109.26,442.33 L110.52,441.89 L111.79,441.48 L113.07,441.08 L114.35,440.71 L115.63,440.35 L116.92,440.01 L118.22,439.68 L119.52,439.37 L120.82,439.08 L122.12,438.79 L123.43,438.52 L124.73,438.25 L126.04,438.00 L127.35,437.75 L128.66,437.51 L129.97,437.27 L131.27,437.04 L132.58,436.82 L133.88,436.59 L135.18,436.36 L136.47,436.14 L137.77,435.91 L139.06,435.68 L140.34,435.45 L141.62,435.21 L142.89,434.97 L144.15,434.72 L145.41,434.46 L146.66,434.20 L147.91,433.92 L153.13,433.11 L158.26,432.24 L163.38,431.40 L168.51,430.58 L173.64,429.80 L178.77,429.04 L183.90,428.32 L189.02,427.63 L194.15,426.96 L199.28,426.31 L204.41,425.68 L209.54,425.07 L214.67,424.49 L219.79,423.95 L224.92,423.45 L230.05,423.00 L235.18,422.57 L240.31,422.17 L245.43,421.78 L250.56,421.40 L255.69,421.04 L260.82,420.70 L265.95,420.37 L271.07,420.05 L276.20,419.74 L281.33,419.45 L286.46,419.17 L291.59,418.91 L296.71,418.66 L301.84,418.41 L306.97,418.16 L312.10,417.90 L317.23,417.65 L322.36,417.39 L327.48,417.15 L332.61,416.92 L337.74,416.71 L342.87,416.53 L348.00,416.38 L353.12,416.28 L358.25,416.21 L363.38,416.20 L368.51,416.23 L373.64,416.30 L378.76,416.41 L383.89,416.54 L389.02,416.70 L394.15,416.88 L399.28,417.09 L404.40,417.31 L409.53,417.54 L414.66,417.77 L419.79,418.02 L424.92,418.26 L430.04,418.50 L435.17,418.76 L440.30,419.05 L445.43,419.37 L450.56,419.71 L455.69,420.08 L460.81,420.46 L465.94,420.86 L471.07,421.27 L476.20,421.69 L481.33,422.11 L486.45,422.54 L491.58,423.00 L496.71,423.47 L501.84,423.97 L506.97,424.49 L512.09,425.03 L517.22,425.61 L522.35,426.21 L527.48,426.83 L532.61,427.48 L537.73,428.15 L542.86,428.84 L547.99,429.57 L553.12,430.34 L558.25,431.14 L563.38,431.97 L568.50,432.86 L573.63,433.78 L578.76,434.76 L583.89,435.82 L589.02,437.05 L594.14,438.39 L599.27,439.83 L604.40,441.30 C626,449 642.3,459 642.3,472.4 C642.3,484 636,492.8 628.6,492.8 L580,491.8 L480,490.4 L362,489.6 L230,491 L138,492 L104,493.2 Z" fill="#ffffff" stroke="#3a3a3a" stroke-width="1.1"/><path d="M9 489.5 L744 489.5" stroke="#b4b4b4" stroke-width="1"/><rect x="81.5" y="416.3" width="560.6" height="76" fill="none" stroke="#6a6ae8" stroke-width="1" stroke-dasharray="2.5,2.5"/><rect x="360" y="414" width="4.4" height="4.4" fill="#5a5aa0"/><rect x="360" y="487.4" width="4.4" height="4.4" fill="#5a5aa0"/><circle cx="604.4" cy="441.3" r="2.2" fill="#fff" stroke="#333" stroke-width="0.9"/><circle cx="642.2" cy="472.6" r="2" fill="#20e020"/><circle cx="628.6" cy="492.8" r="2.2" fill="#1a1ae0"/><path d="M14.3 502.5 L36 502.5" stroke="#40e040" stroke-width="1.2"/><path d="M32 499 L36 502.5 L32 506" fill="none" stroke="#40e040" stroke-width="0.9"/><path d="M14.3 502.5 L14.3 481" stroke="#3030d0" stroke-width="1.2"/><path d="M10.8 485 L14.3 481 L17.8 485" fill="none" stroke="#3030d0" stroke-width="0.9"/></svg>
<span class="t" style="left:12.00px;top:473px;font-size:6.5px;line-height:9px;color:#3030d0;font-weight:normal;transform:scaleX(1.1349);transform-origin:0 0;">Z</span>
<span class="t" style="left:38.00px;top:499px;font-size:6.5px;line-height:9px;color:#60e060;font-weight:normal;transform:scaleX(1.0372);transform-origin:0 0;">Y</span>
<span class="t" style="left:360.00px;top:404px;font-size:7.5px;line-height:10px;color:#1e1e64;font-weight:normal;transform:scaleX(0.8743);transform-origin:0 0;">T</span>
<span class="t" style="left:362.00px;top:496px;font-size:7.5px;line-height:10px;color:#1e1e64;font-weight:normal;transform:scaleX(0.9113);transform-origin:0 0;">VC</span>
<span class="t" style="left:632.00px;top:404px;font-size:7.5px;line-height:10px;color:#1e1e64;font-weight:normal;transform:scaleX(0.9209);transform-origin:0 0;">AD</span>
<span class="t" style="left:515.00px;top:419px;font-size:7.5px;line-height:10px;color:#1e1e64;font-weight:normal;transform:scaleX(1.0256);transform-origin:0 0;">4&quot;</span>
<span class="t" style="left:577.00px;top:419px;font-size:7.5px;line-height:10px;color:#1e1e64;font-weight:normal;transform:scaleX(1.1136);transform-origin:0 0;">2&quot;</span>
<span class="t" style="left:608.00px;top:419px;font-size:7.5px;line-height:10px;color:#1e1e64;font-weight:normal;transform:scaleX(0.8791);transform-origin:0 0;">1&quot;</span>
<span class="t" style="left:619.00px;top:419px;font-size:7.5px;line-height:10px;color:#1e1e64;font-weight:normal;transform:scaleX(0.9933);transform-origin:0 0;">1/2&quot;</span>
<span class="t" style="left:646.00px;top:451px;font-size:7.5px;line-height:10px;color:#1e1e64;font-weight:normal;transform:scaleX(1.0582);transform-origin:0 0;">W</span>
<span class="t" style="left:628.40px;top:468px;font-size:7.5px;line-height:10px;color:#1e1e64;font-weight:normal;transform:scaleX(0.9189);transform-origin:0 0;">AB</span>
<span class="t" style="left:490.40px;top:473px;font-size:7.5px;line-height:10px;color:#1e1e64;font-weight:normal;transform:scaleX(0.9393);transform-origin:0 0;">TE</span>
<span class="t" style="left:495.00px;top:496px;font-size:7.5px;line-height:10px;color:#1e1e64;font-weight:normal;transform:scaleX(0.9396);transform-origin:0 0;">V1/2&quot;</span>
<span class="t" style="left:628.00px;top:496px;font-size:7.5px;line-height:10px;color:#1e1e64;font-weight:normal;transform:scaleX(1.1985);transform-origin:0 0;">V</span>
<span class="t" style="left:758.00px;top:68px;font-size:9.2px;line-height:12px;color:#a4a4a4;font-weight:normal;transform:scaleX(0.8755);transform-origin:0 0;-webkit-text-stroke:0;">Master Scale</span>
<div style="left:752px;top:62px;width:145px;height:1px;background:#b0b0b0;"></div>
<div style="left:883px;top:68px;width:13px;height:13px;background:#e6e6e6;"></div>
<span class="t" style="left:804.70px;top:87px;font-size:9px;line-height:12px;color:#24246e;font-weight:normal;transform:scaleX(0.8485);transform-origin:0 0;">New model</span>
<div style="left:755px;top:101px;width:52px;height:13px;border-top:1px solid #a4a4a4;border-left:1px solid #a4a4a4;border-right:1px solid #e4e8ee;border-bottom:1px solid #e4e8ee;background:#f4f7fc;"></div>
<div style="left:807.5px;top:101px;width:43px;height:13px;border-top:1px solid #a4a4a4;border-left:1px solid #a4a4a4;border-right:1px solid #e4e8ee;border-bottom:1px solid #e4e8ee;background:#f4f7fc;"></div>
<div style="left:851px;top:101px;width:43px;height:13px;border-top:1px solid #a4a4a4;border-left:1px solid #a4a4a4;border-right:1px solid #e4e8ee;border-bottom:1px solid #e4e8ee;background:#f4f7fc;"></div>
<span class="t" style="left:759.80px;top:101px;font-size:9px;line-height:12px;color:#111;font-weight:bold;transform:scaleX(1.0423);transform-origin:0 0;">6'1 17/32&quot;</span>
<span class="t" style="left:811.60px;top:101px;font-size:9px;line-height:12px;color:#111;font-weight:bold;transform:scaleX(1.0324);transform-origin:0 0;">18 7/64&quot;</span>
<span class="t" style="left:854.80px;top:101px;font-size:9px;line-height:12px;color:#111;font-weight:bold;transform:scaleX(1.0528);transform-origin:0 0;">2 23/64&quot;</span>
<span class="t" style="left:765.00px;top:114px;font-size:9px;line-height:12px;color:#24246e;font-weight:normal;transform:scaleX(0.8745);transform-origin:0 0;">Zero Pt.</span>
<span class="t" style="left:806.40px;top:114px;font-size:9px;line-height:12px;color:#24246e;font-weight:normal;transform:scaleX(0.8868);transform-origin:0 0;">Max Wdt.</span>
<span class="t" style="left:858.50px;top:114px;font-size:9px;line-height:12px;color:#24246e;font-weight:normal;transform:scaleX(0.8560);transform-origin:0 0;">Max Thck.</span>
<div style="left:755px;top:126px;width:45px;height:12px;border-top:1px solid #a4a4a4;border-left:1px solid #a4a4a4;border-right:1px solid #e4e8ee;border-bottom:1px solid #e4e8ee;background:#f4f7fc;"></div>
<div style="left:802px;top:126px;width:45px;height:12px;border-top:1px solid #a4a4a4;border-left:1px solid #a4a4a4;border-right:1px solid #e4e8ee;border-bottom:1px solid #e4e8ee;background:#f4f7fc;"></div>
<div style="left:849px;top:126px;width:45px;height:12px;border-top:1px solid #a4a4a4;border-left:1px solid #a4a4a4;border-right:1px solid #e4e8ee;border-bottom:1px solid #e4e8ee;background:#f4f7fc;"></div>
<span class="t" style="left:760.60px;top:125px;font-size:8.5px;line-height:12px;color:#24246e;font-weight:normal;transform:scaleX(0.8604);transform-origin:0 0;">@36.222&quot;</span>
<span class="t" style="left:806.90px;top:125px;font-size:8.5px;line-height:12px;color:#24246e;font-weight:normal;transform:scaleX(0.9109);transform-origin:0 0;">@36.219&quot;</span>
<span class="t" style="left:854.60px;top:125px;font-size:8.5px;line-height:12px;color:#24246e;font-weight:normal;transform:scaleX(0.9189);transform-origin:0 0;">@36.219&quot;</span>
<span class="t" style="left:760.20px;top:144px;font-size:9px;line-height:12px;color:#24246e;font-weight:normal;transform:scaleX(0.8029);transform-origin:0 0;">Volume</span>
<span class="t" style="left:801.50px;top:144px;font-size:9px;line-height:12px;color:#111;font-weight:bold;transform:scaleX(0.9236);transform-origin:0 0;">28.89 L</span>
<div style="left:845px;top:143px;width:14px;height:14px;background:linear-gradient(#f2f5fc,#e2e8f6);border:1px solid #c4cef0;border-radius:2px;"></div>
<div style="left:860px;top:143px;width:30px;height:14px;background:linear-gradient(#f2f5fc,#e2e8f6);border:1px solid #c4cef0;border-radius:2px;"></div>
<span class="t" style="left:850.00px;top:142px;font-size:9px;line-height:12px;color:#24246e;font-weight:normal;">*</span>
<span class="t" style="left:862.50px;top:144px;font-size:9px;line-height:12px;color:#24246e;font-weight:normal;transform:scaleX(0.8140);transform-origin:0 0;">Resize</span>
<div style="left:755.5px;top:164px;width:137px;height:92px;border:1px solid #d0d4da;border-radius:2px;"></div>
<div style="left:760px;top:160px;width:22px;height:9px;background:#eff3fa;"></div>
<span class="t" style="left:761.40px;top:159px;font-size:9px;line-height:12px;color:#24246e;font-weight:normal;transform:scaleX(0.8787);transform-origin:0 0;">Table</span>
<div style="left:845px;top:159px;width:45px;height:12px;background:linear-gradient(#f2f5fc,#e2e8f6);border:1px solid #c4cef0;border-radius:2px;"></div>
<span class="t" style="left:850.40px;top:159px;font-size:9px;line-height:12px;color:#24246e;font-weight:normal;transform:scaleX(0.9396);transform-origin:0 0;">More &gt;&gt;</span>
<div style="left:773px;top:172px;width:38.5px;height:12.5px;background:linear-gradient(#f2f5fc,#e2e8f6);border:1px solid #c4cef0;border-radius:2px;"></div>
<span class="t" style="left:781.20px;top:171px;font-size:9px;line-height:12px;color:#24246e;font-weight:normal;transform:scaleX(0.8602);transform-origin:0 0;">Width</span>
<div style="left:813px;top:172px;width:37.5px;height:12.5px;background:linear-gradient(#f2f5fc,#e2e8f6);border:1px solid #c4cef0;border-radius:2px;"></div>
<span class="t" style="left:816.50px;top:171px;font-size:9px;line-height:12px;color:#24246e;font-weight:normal;transform:scaleX(0.8387);transform-origin:0 0;">Thic. Str</span>
<div style="left:852px;top:172px;width:38px;height:12.5px;background:linear-gradient(#f2f5fc,#e2e8f6);border:1px solid #c4cef0;border-radius:2px;"></div>
<span class="t" style="left:853.50px;top:171px;font-size:9px;line-height:12px;color:#24246e;font-weight:normal;transform:scaleX(0.8619);transform-origin:0 0;">Rock. Str</span>
<span class="t" style="left:757.90px;top:172px;font-size:9px;line-height:12px;color:#24246e;font-weight:normal;transform:scaleX(0.9203);transform-origin:0 0;">/tail</span>
<span class="t" style="left:760.80px;top:185px;font-size:9px;line-height:12px;color:#24246e;font-weight:normal;transform:scaleX(0.9158);transform-origin:0 0;">0&quot;</span>
<div style="left:773px;top:185px;width:38.5px;height:13px;border-top:1px solid #b0b0b0;border-left:1px solid #b0b0b0;border-right:1px solid #f8f8f8;border-bottom:1px solid #f8f8f8;background:#f6f8fc;"></div>
<span class="t" style="left:777.70px;top:185px;font-size:9px;line-height:12px;color:#24246e;font-weight:normal;transform:scaleX(0.9087);transform-origin:0 0;">5 27/64&quot;</span>
<div style="left:813px;top:185px;width:37.5px;height:13px;border-top:1px solid #b0b0b0;border-left:1px solid #b0b0b0;border-right:1px solid #f8f8f8;border-bottom:1px solid #f8f8f8;background:#f6f8fc;"></div>
<span class="t" style="left:819.90px;top:185px;font-size:9px;line-height:12px;color:#24246e;font-weight:normal;transform:scaleX(0.9060);transform-origin:0 0;">29/64&quot;</span>
<div style="left:852px;top:185px;width:38px;height:13px;border-top:1px solid #b0b0b0;border-left:1px solid #b0b0b0;border-right:1px solid #f8f8f8;border-bottom:1px solid #f8f8f8;background:#f6f8fc;"></div>
<span class="t" style="left:856.60px;top:185px;font-size:9px;line-height:12px;color:#24246e;font-weight:normal;transform:scaleX(0.8907);transform-origin:0 0;">2 33/64&quot;</span>
<span class="t" style="left:759.10px;top:198px;font-size:9px;line-height:12px;color:#24246e;font-weight:normal;transform:scaleX(0.8253);transform-origin:0 0;">12&quot;</span>
<div style="left:773px;top:198px;width:38.5px;height:13px;border-top:1px solid #b0b0b0;border-left:1px solid #b0b0b0;border-right:1px solid #f8f8f8;border-bottom:1px solid #f8f8f8;background:#f6f8fc;"></div>
<span class="t" style="left:778.60px;top:198px;font-size:9px;line-height:12px;color:#24246e;font-weight:normal;transform:scaleX(0.8636);transform-origin:0 0;">14 5/16&quot;</span>
<div style="left:813px;top:198px;width:37.5px;height:13px;border-top:1px solid #b0b0b0;border-left:1px solid #b0b0b0;border-right:1px solid #f8f8f8;border-bottom:1px solid #f8f8f8;background:#f6f8fc;"></div>
<span class="t" style="left:817.30px;top:198px;font-size:9px;line-height:12px;color:#24246e;font-weight:normal;transform:scaleX(0.8305);transform-origin:0 0;">1 35/64&quot;</span>
<div style="left:852px;top:198px;width:38px;height:13px;border-top:1px solid #b0b0b0;border-left:1px solid #b0b0b0;border-right:1px solid #f8f8f8;border-bottom:1px solid #f8f8f8;background:#f6f8fc;"></div>
<span class="t" style="left:859.50px;top:198px;font-size:9px;line-height:12px;color:#24246e;font-weight:normal;transform:scaleX(0.8577);transform-origin:0 0;">1 1/16&quot;</span>
<span class="t" style="left:759.50px;top:224px;font-size:9px;line-height:12px;color:#24246e;font-weight:normal;transform:scaleX(0.7571);transform-origin:0 0;">12&quot;</span>
<div style="left:773px;top:224.5px;width:38.5px;height:13px;border-top:1px solid #b0b0b0;border-left:1px solid #b0b0b0;border-right:1px solid #f8f8f8;border-bottom:1px solid #f8f8f8;background:#f6f8fc;"></div>
<span class="t" style="left:778.50px;top:224px;font-size:9px;line-height:12px;color:#24246e;font-weight:normal;transform:scaleX(0.8726);transform-origin:0 0;">12 3/64&quot;</span>
<div style="left:813px;top:224.5px;width:37.5px;height:13px;border-top:1px solid #b0b0b0;border-left:1px solid #b0b0b0;border-right:1px solid #f8f8f8;border-bottom:1px solid #f8f8f8;background:#f6f8fc;"></div>
<span class="t" style="left:817.50px;top:224px;font-size:9px;line-height:12px;color:#24246e;font-weight:normal;transform:scaleX(0.8937);transform-origin:0 0;">1 45/64&quot;</span>
<div style="left:852px;top:224.5px;width:38px;height:13px;border-top:1px solid #b0b0b0;border-left:1px solid #b0b0b0;border-right:1px solid #f8f8f8;border-bottom:1px solid #f8f8f8;background:#f6f8fc;"></div>
<span class="t" style="left:861.40px;top:224px;font-size:9px;line-height:12px;color:#24246e;font-weight:normal;transform:scaleX(0.8441);transform-origin:0 0;">1 1/2&quot;</span>
<span class="t" style="left:761.00px;top:237px;font-size:9px;line-height:12px;color:#24246e;font-weight:normal;transform:scaleX(0.8547);transform-origin:0 0;">0&quot;</span>
<div style="left:773px;top:236.5px;width:38.5px;height:13px;border-top:1px solid #b0b0b0;border-left:1px solid #b0b0b0;border-right:1px solid #f8f8f8;border-bottom:1px solid #f8f8f8;background:#f6f8fc;"></div>
<span class="t" style="left:782.90px;top:237px;font-size:9px;line-height:12px;color:#24246e;font-weight:normal;transform:scaleX(0.9169);transform-origin:0 0;">9/32&quot;</span>
<div style="left:813px;top:236.5px;width:37.5px;height:13px;border-top:1px solid #b0b0b0;border-left:1px solid #b0b0b0;border-right:1px solid #f8f8f8;border-bottom:1px solid #f8f8f8;background:#f6f8fc;"></div>
<span class="t" style="left:819.70px;top:237px;font-size:9px;line-height:12px;color:#24246e;font-weight:normal;transform:scaleX(0.9099);transform-origin:0 0;">21/64&quot;</span>
<div style="left:852px;top:236.5px;width:38px;height:13px;border-top:1px solid #b0b0b0;border-left:1px solid #b0b0b0;border-right:1px solid #f8f8f8;border-bottom:1px solid #f8f8f8;background:#f6f8fc;"></div>
<span class="t" style="left:861.00px;top:237px;font-size:9px;line-height:12px;color:#24246e;font-weight:normal;transform:scaleX(0.8613);transform-origin:0 0;">4 7/8&quot;</span>
<span class="t" style="left:757.30px;top:211px;font-size:9px;line-height:12px;color:#24246e;font-weight:normal;transform:scaleX(0.8580);transform-origin:0 0;">/nose</span>
<div style="left:845px;top:253px;width:45px;height:12px;background:linear-gradient(#f2f5fc,#e2e8f6);border:1px solid #c4cef0;border-radius:2px;"></div>
<span class="t" style="left:852.50px;top:252px;font-size:9px;line-height:12px;color:#24246e;font-weight:normal;transform:scaleX(0.9056);transform-origin:0 0;">&lt;&lt; Btns</span>
<div style="left:755.5px;top:263px;width:137px;height:27px;border:1px solid #d0d4da;border-radius:2px;"></div>
<div style="left:760px;top:259px;width:74px;height:9px;background:#eff3fa;"></div>
<div style="left:845px;top:253px;width:45px;height:12px;background:linear-gradient(#f2f5fc,#e2e8f6);border:1px solid #c4cef0;border-radius:2px;"></div>
<span class="t" style="left:852.50px;top:252px;font-size:9px;line-height:12px;color:#24246e;font-weight:normal;transform:scaleX(0.9056);transform-origin:0 0;">&lt;&lt; Btns</span>
<span class="t" style="left:761.00px;top:257px;font-size:9px;line-height:12px;color:#24246e;font-weight:normal;transform:scaleX(0.8580);transform-origin:0 0;">Measurements along</span>
<div style="left:759.5px;top:269px;width:61px;height:17px;background:linear-gradient(#f2f5fc,#e2e8f6);border:1px solid #c4cef0;border-radius:2px;"></div>
<div style="left:828px;top:269px;width:61px;height:17px;background:#ffffff;border:1px solid #7088e8;border-radius:2px;"></div>
<span class="t" style="left:765.00px;top:271px;font-size:9px;line-height:12px;color:#24246e;font-weight:normal;transform:scaleX(0.8885);transform-origin:0 0;">A straight line</span>
<span class="t" style="left:835.30px;top:271px;font-size:9px;line-height:12px;color:#222;font-weight:normal;transform:scaleX(0.8663);transform-origin:0 0;">The Stringer</span>
<div style="left:755.5px;top:296px;width:137px;height:27px;border:1px solid #d0d4da;border-radius:2px;"></div>
<div style="left:760px;top:292px;width:36px;height:9px;background:#eff3fa;"></div>
<span class="t" style="left:761.00px;top:290px;font-size:9px;line-height:12px;color:#24246e;font-weight:normal;transform:scaleX(0.9064);transform-origin:0 0;">Structure</span>
<div style="left:759.5px;top:302.5px;width:61px;height:16.5px;background:linear-gradient(#f2f5fc,#e2e8f6);border:1px solid #c4cef0;border-radius:2px;"></div>
<div style="left:828px;top:302.5px;width:61px;height:16.5px;background:linear-gradient(#f2f5fc,#e2e8f6);border:1px solid #c4cef0;border-radius:2px;"></div>
<span class="t" style="left:772.20px;top:305px;font-size:9px;line-height:12px;color:#24246e;font-weight:normal;transform:scaleX(0.8149);transform-origin:0 0;">New Slice</span>
<span class="t" style="left:832.40px;top:305px;font-size:9px;line-height:12px;color:#24246e;font-weight:normal;transform:scaleX(0.8542);transform-origin:0 0;">New 3D Layer</span>
<span class="t" style="left:757.60px;top:336px;font-size:9.2px;line-height:12px;color:#a4a4a4;font-weight:normal;transform:scaleX(0.9151);transform-origin:0 0;-webkit-text-stroke:0;">Top view curves</span>
<div style="left:883px;top:336px;width:13px;height:13px;background:#e6e6e6;"></div>
<div style="left:752px;top:353px;width:145px;height:13px;background:linear-gradient(#f4f4f4,#e8e8e8);border-top:1px solid #7a7a7a;border-bottom:1px solid #c8c8c8;"></div>
<div style="left:859px;top:354px;width:1px;height:12px;background:#c8c8c8;"></div>
<div style="left:874px;top:354px;width:1px;height:12px;background:#c8c8c8;"></div>
<span class="t" style="left:757.00px;top:355px;font-size:9px;line-height:12px;color:#222;font-weight:normal;transform:scaleX(0.8699);transform-origin:0 0;">Curves</span>
<span class="t" style="left:864.50px;top:355px;font-size:9px;line-height:12px;color:#222;font-weight:normal;transform:scaleX(0.8889);transform-origin:0 0;">D.</span>
<span class="t" style="left:879.70px;top:355px;font-size:9px;line-height:12px;color:#222;font-weight:normal;transform:scaleX(0.8573);transform-origin:0 0;">Prop</span>
<div style="left:875px;top:405px;width:22px;height:12.5px;background:#00f000;"></div>
<div style="left:875px;top:417.5px;width:22px;height:12px;background:#000000;"></div>
<div style="left:766px;top:455px;width:131px;height:12px;background:#e4fae4;"></div>
<span class="t" style="left:766.90px;top:368px;font-size:9px;line-height:12px;color:#111;font-weight:normal;transform:scaleX(0.8629);transform-origin:0 0;">Outline</span>
<span class="t" style="left:884.00px;top:368px;font-size:9px;line-height:12px;color:#222;font-weight:normal;transform:scaleX(1.0659);transform-origin:0 0;">&gt;&gt;</span>
<span class="t" style="left:766.90px;top:380px;font-size:9px;line-height:12px;color:#111;font-weight:normal;transform:scaleX(0.8783);transform-origin:0 0;">Outline Dev</span>
<span class="t" style="left:884.00px;top:380px;font-size:9px;line-height:12px;color:#222;font-weight:normal;transform:scaleX(1.0659);transform-origin:0 0;">&gt;&gt;</span>
<span class="t" style="left:766.90px;top:393px;font-size:9px;line-height:12px;color:#111;font-weight:normal;transform:scaleX(0.8880);transform-origin:0 0;">Stringer Bot</span>
<span class="t" style="left:884.00px;top:393px;font-size:9px;line-height:12px;color:#222;font-weight:normal;transform:scaleX(1.0659);transform-origin:0 0;">&gt;&gt;</span>
<span class="t" style="left:766.90px;top:405px;font-size:9px;line-height:12px;color:#111;font-weight:normal;transform:scaleX(0.8450);transform-origin:0 0;">Rail</span>
<span class="t" style="left:884.00px;top:405px;font-size:9px;line-height:12px;color:#222;font-weight:normal;transform:scaleX(1.0659);transform-origin:0 0;">&gt;&gt;</span>
<span class="t" style="left:865.40px;top:405px;font-size:9px;line-height:12px;color:#222;font-weight:normal;transform:scaleX(0.7491);transform-origin:0 0;">X</span>
<span class="t" style="left:766.90px;top:418px;font-size:9px;line-height:12px;color:#111;font-weight:normal;transform:scaleX(0.9064);transform-origin:0 0;">Apex</span>
<span class="t" style="left:884.00px;top:418px;font-size:9px;line-height:12px;color:#ffffff;font-weight:normal;transform:scaleX(1.0659);transform-origin:0 0;">&gt;&gt;</span>
<span class="t" style="left:865.40px;top:418px;font-size:9px;line-height:12px;color:#222;font-weight:normal;transform:scaleX(0.7491);transform-origin:0 0;">X</span>
<span class="t" style="left:766.90px;top:430px;font-size:9px;line-height:12px;color:#111;font-weight:normal;transform:scaleX(0.8496);transform-origin:0 0;">Deck 1</span>
<span class="t" style="left:884.00px;top:430px;font-size:9px;line-height:12px;color:#222;font-weight:normal;transform:scaleX(1.0659);transform-origin:0 0;">&gt;&gt;</span>
<span class="t" style="left:766.90px;top:443px;font-size:9px;line-height:12px;color:#111;font-weight:normal;transform:scaleX(0.8868);transform-origin:0 0;">Stringer Top</span>
<span class="t" style="left:884.00px;top:443px;font-size:9px;line-height:12px;color:#222;font-weight:normal;transform:scaleX(1.0659);transform-origin:0 0;">&gt;&gt;</span>
<span class="t" style="left:766.90px;top:455px;font-size:9px;line-height:12px;color:#111;font-weight:normal;transform:scaleX(0.8036);transform-origin:0 0;">Plugs</span>
<span class="t" style="left:884.00px;top:455px;font-size:9px;line-height:12px;color:#222;font-weight:normal;transform:scaleX(1.0659);transform-origin:0 0;">&gt;&gt;</span>
<span class="t" style="left:865.40px;top:455px;font-size:9px;line-height:12px;color:#222;font-weight:normal;transform:scaleX(0.7491);transform-origin:0 0;">X</span>
<svg style="left:0;top:0" width="900" height="538" viewBox="0 0 900 538"><path d="M754.2 378.2 C756 371.5 760 369.5 766.2 374.7" fill="none" stroke="#111" stroke-width="1.5"/><path d="M754.2 390.6 C756 383.90000000000003 760 381.90000000000003 766.2 387.1" fill="none" stroke="#111" stroke-width="1.5"/><path d="M754.2 403.3 C756 396.6 760 394.6 766.2 399.8" fill="none" stroke="#111" stroke-width="1.5"/><path d="M754.2 415.9 C756 409.2 760 407.2 766.2 412.4" fill="none" stroke="#111" stroke-width="1.5"/><path d="M754.2 428.2 C756 421.5 760 419.5 766.2 424.7" fill="none" stroke="#111" stroke-width="1.5"/><path d="M754.5 422.7 L764.5 418.2" stroke="#3050f0" stroke-width="0.9"/><path d="M755.5 420.2 L765.5 420.7" stroke="#30c040" stroke-width="0.9"/><path d="M757 418.2 L766 422.7" stroke="#e04040" stroke-width="0.9"/><path d="M754.2 440.5 C756 433.8 760 431.8 766.2 437" fill="none" stroke="#111" stroke-width="1.5"/><path d="M754.2 453.2 C756 446.5 760 444.5 766.2 449.7" fill="none" stroke="#111" stroke-width="1.5"/><path d="M754.5 458.6 Q759.5 458.6 764.5 465.6 L762 465.6 L761 466.6 L759.5 465.6 L758.5 465.6 Q758 462.1 754.5 458.6 Z" fill="#505a60"/></svg>
<span class="t" style="left:3.00px;top:525px;font-size:9.6px;line-height:13px;color:#1a1a1a;font-weight:normal;transform:scaleX(0.8785);transform-origin:0 0;-webkit-text-stroke:0.05px #1a1a1a;">Use Ctrl key to get more X precision</span>
<div style="left:602.3px;top:525.5px;width:17.800000000000068px;height:13px;border-top:1px solid #d4d4d4;border-left:1px solid #d4d4d4;border-right:1px solid #ffffff;"></div>
<div style="left:622.8px;top:525.5px;width:51.10000000000002px;height:13px;border-top:1px solid #d4d4d4;border-left:1px solid #d4d4d4;border-right:1px solid #ffffff;"></div>
<div style="left:676.1px;top:525.5px;width:50.0px;height:13px;border-top:1px solid #d4d4d4;border-left:1px solid #d4d4d4;border-right:1px solid #ffffff;"></div>
<div style="left:729px;top:525.5px;width:51.60000000000002px;height:13px;border-top:1px solid #d4d4d4;border-left:1px solid #d4d4d4;border-right:1px solid #ffffff;"></div>
<div style="left:782.8px;top:525.5px;width:39.200000000000045px;height:13px;border-top:1px solid #d4d4d4;border-left:1px solid #d4d4d4;border-right:1px solid #ffffff;"></div>
<div style="left:824.3px;top:525.5px;width:39.700000000000045px;height:13px;border-top:1px solid #d4d4d4;border-left:1px solid #d4d4d4;border-right:1px solid #ffffff;"></div>
<div style="left:866.5px;top:525.5px;width:19.0px;height:13px;border-top:1px solid #d4d4d4;border-left:1px solid #d4d4d4;border-right:1px solid #ffffff;"></div>
<span class="t" style="left:604.50px;top:526px;font-size:9px;line-height:12px;color:#222;font-weight:normal;">&quot;</span>
<span class="t" style="left:624.60px;top:525px;font-size:9.5px;line-height:13px;color:#111;font-weight:normal;transform:scaleX(0.8502);transform-origin:0 0;">X: 41 9/32&quot;</span>
<span class="t" style="left:677.20px;top:525px;font-size:9.5px;line-height:13px;color:#111;font-weight:normal;transform:scaleX(0.8421);transform-origin:0 0;">Y: 0.436&quot;</span>
<span class="t" style="left:730.10px;top:525px;font-size:9.5px;line-height:13px;color:#111;font-weight:normal;transform:scaleX(0.9019);transform-origin:0 0;">Z: 0&quot;</span>
<svg style="left:886px;top:525px" width="13" height="13" viewBox="0 0 13 13"><path d="M12 3 L3 12 M12 7 L7 12 M12 10.5 L10.5 12" stroke="#b0b0b0" stroke-width="1"/></svg>
<div style="left:0px;top:0px;width:900px;height:538px;border:1px solid #bcbcbc;border-bottom:none;border-radius:7px 7px 0 0;"></div>
</body></html>
